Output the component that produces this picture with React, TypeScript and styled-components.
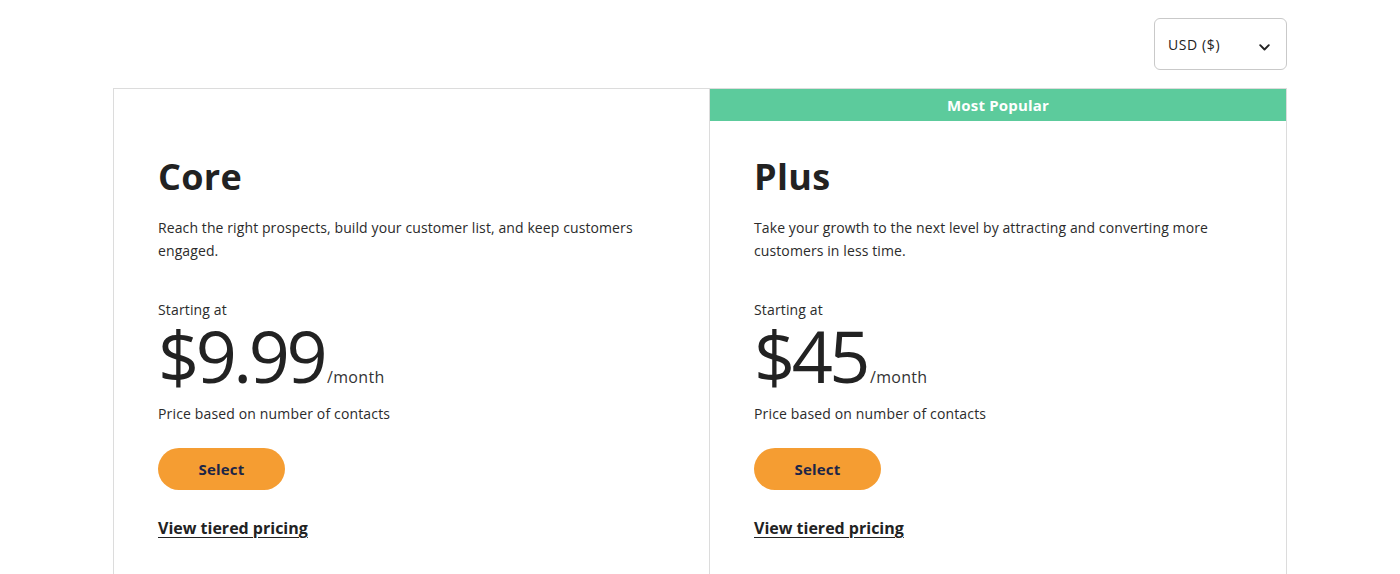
import React from "react";
import styled, { createGlobalStyle } from "styled-components";

const Global = createGlobalStyle`
  html, body { margin: 0; padding: 0; background: #fff; }
  body { font-family: "Open Sans", "Liberation Sans", sans-serif; color: #2b2b2b; }
  * { box-sizing: border-box; }
`;

const Page = styled.div`
  width: 1174px;
  margin: 0 auto;
  padding-top: 18px;
`;

const TopBar = styled.div`
  display: flex;
  justify-content: flex-end;
  margin-bottom: 18px;
`;

const CurrencySelect = styled.button`
  width: 133px;
  height: 52px;
  border: 1px solid #c9c9c9;
  border-radius: 6px;
  background: #fff;
  display: flex;
  align-items: center;
  justify-content: space-between;
  padding: 0 16px 0 13px;
  font-family: inherit;
  font-size: 14px;
  letter-spacing: 0.6px;
  color: #222;
  cursor: pointer;

  svg {
    margin-top: 6px;
  }
`;

const Plans = styled.div`
  display: grid;
  grid-template-columns: 595px minmax(0, 1fr);
  border: 1px solid #dcdcdc;
  border-bottom: none;
  height: 487px;
`;

const Card = styled.div<{ $last?: boolean }>`
  display: flex;
  flex-direction: column;
  min-width: 0;
  border-left: ${(p) => (p.$last ? "1px solid #dcdcdc" : "none")};
`;

const Banner = styled.div<{ $show: boolean }>`
  height: 32px;
  background: ${(p) => (p.$show ? "#5ccb9c" : "transparent")};
  color: #fff;
  font-weight: 700;
  font-size: 15px;
  letter-spacing: 0.2px;
  display: flex;
  align-items: center;
  justify-content: center;
`;

const Body = styled.div`
  padding: 35px 44px 0 44px;
  display: flex;
  flex-direction: column;
  align-items: flex-start;
`;

const Title = styled.h2`
  margin: 0;
  font-size: 36px;
  line-height: 41px;
  font-weight: 700;
  letter-spacing: 0.3px;
  color: #222;
`;

const Desc = styled.p`
  margin: 19px 0 0;
  font-size: 14px;
  line-height: 23px;
  letter-spacing: 0.1px;
  color: #2b2b2b;
`;

const Starting = styled.div`
  margin-top: 38px;
  font-size: 14px;
  line-height: 20px;
  letter-spacing: 0.15px;
`;

const PriceRow = styled.div`
  display: flex;
  align-items: baseline;
`;

const Price = styled.span`
  font-size: 72px;
  line-height: 70px;
  font-weight: 400;
  color: #222;
  letter-spacing: -3.5px;
  margin-right: 3px;
`;

const Per = styled.span`
  font-size: 16px;
  letter-spacing: 0.3px;
  color: #333;
`;

const Note = styled.div`
  margin-top: 14px;
  font-size: 14px;
  line-height: 20px;
  letter-spacing: 0.15px;
`;

const SelectButton = styled.button`
  margin-top: 24px;
  width: 127px;
  height: 42px;
  border: none;
  border-radius: 21px;
  background: #f59d32;
  color: #1c2547;
  font-family: inherit;
  font-weight: 700;
  font-size: 15px;
  letter-spacing: 0.2px;
  cursor: pointer;
`;

const TierLink = styled.a`
  margin-top: 27px;
  font-size: 16px;
  font-weight: 700;
  color: #222;
  text-decoration: underline;
  text-underline-offset: 3px;
  line-height: 22px;
`;

const Chevron = () => (
  <svg width="11" height="7" viewBox="0 0 11 7" fill="none">
    <path d="M1.2 1.2 L5.5 5.5 L9.8 1.2" stroke="#222" strokeWidth="1.9" strokeLinecap="round" strokeLinejoin="round" />
  </svg>
);

const plans = [
  {
    name: "Core",
    desc: "Reach the right prospects, build your customer list, and keep customers engaged.",
    price: "$9.99",
    popular: false,
  },
  {
    name: "Plus",
    desc: "Take your growth to the next level by attracting and converting more customers in less time.",
    price: "$45",
    popular: true,
  },
];

export default function App() {
  return (
    <>
      <Global />
      <Page>
        <TopBar>
          <CurrencySelect>
            <span>USD ($)</span>
            <Chevron />
          </CurrencySelect>
        </TopBar>
        <Plans>
          {plans.map((p, i) => (
            <Card key={p.name} $last={i > 0}>
              <Banner $show={p.popular}>{p.popular ? "Most Popular" : ""}</Banner>
              <Body>
                <Title>{p.name}</Title>
                <Desc>{p.desc}</Desc>
                <Starting>Starting at</Starting>
                <PriceRow>
                  <Price>{p.price}</Price>
                  <Per>/month</Per>
                </PriceRow>
                <Note>Price based on number of contacts</Note>
                <SelectButton>Select</SelectButton>
                <TierLink href="#">View tiered pricing</TierLink>
              </Body>
            </Card>
          ))}
        </Plans>
      </Page>
    </>
  );
}
